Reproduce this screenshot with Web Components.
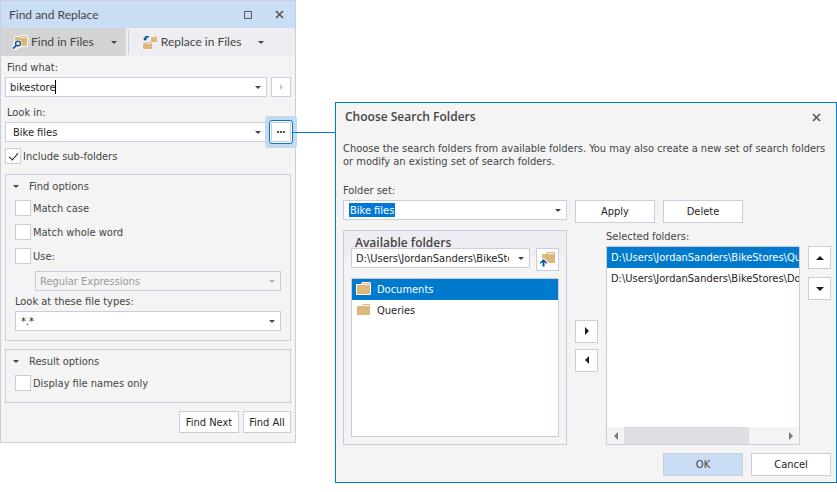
<!DOCTYPE html>
<html lang="en">
<head>
<meta charset="utf-8">
<title>Find and Replace</title>
<style>
  html { background: #fff; }
  body {
    margin: 0;
    font: 11px/13px "DejaVu Sans Condensed", "DejaVu Sans", sans-serif;
    color: #444;
    --line: #ccccdf;
    --panel: #f4f4f4;
    --head: #eeeef2;
    --accent: #007acc;
    --soft: #c9def5;
    --title-font: Lato, "Open Sans", sans-serif;
    --heading-font: "Open Sans", "Noto Sans", sans-serif;
  }
</style>
</head>
<body>
<search-workspace></search-workspace>

<script>
const define = (name, html, setup) => {
  const template = document.createElement('template');
  template.innerHTML = '<style>*{box-sizing:border-box}</style>' + html;
  customElements.define(name, class extends HTMLElement {
    connectedCallback() {
      if (this.shadowRoot) return;
      const root = this.attachShadow({ mode: 'open' });
      root.append(template.content.cloneNode(true));
      if (setup) setup(this, root);
    }
  });
};

const ICONS = {
  down: ['8 4', '<path d="M0 0h8L4 4z"/>'],
  up: ['8 4', '<path d="M0 4h8L4 0z"/>'],
  right: ['4 8', '<path d="M0 0v8l4-4z"/>'],
  left: ['4 8', '<path d="M4 0v8L0 4z"/>'],
  small: ['6 3', '<path d="M0 0h6L3 3z"/>'],
  play: ['3 6', '<path d="M0 0v6l3-3z"/>'],
  dots: ['8 2', '<path d="M0 0h2v2H0zM3 0h2v2H3zM6 0h2v2H6z"/>'],
  close: ['9 9', '<path d="M1 1l7 7M8 1L1 8" fill="none" stroke="currentColor" stroke-width="1.6"/>'],
  max: ['8 8', '<path d="M.5.5h7v7h-7z" fill="none" stroke="currentColor"/>'],
  folder: ['15 13', '<path d="M0 2h5l1-2h8l1 1v11l-1 1H0z" fill="#fff"/><path d="M1 3h5l1-2h7v11H1z" fill="#dcb67a"/><path d="M7 2h6v1H6.500z" fill="#fff"/>'],
  search: ['16 15', '<path d="M2 1h5l1-1h8v12H9L4 15H0v-4l2-2z" fill="#f6f6f6"/><path d="M3 2h5l1-1h6v10H9.500V6.500L7 4.500 3 6z" fill="#dcb67a"/><path d="M9 2h5v1H8.500z" fill="#fff"/><circle cx="6" cy="8.500" r="2.400" fill="#f0f0f0" stroke="#00539c" stroke-width="1.300"/><path d="M4.300 10.300L1 13.600" stroke="#00539c" stroke-width="1.700"/>'],
  replace: ['16 15', '<path d="M9 1h2l1-1h4v7H9zM0 8h1l1-2h6l1 1v8H0z" fill="#f6f6f6"/><path d="M9 2h3l1-1h2v6H9zM1 8h2l1-1h5v1h1v6H1z" fill="#dcb67a"/><path d="M13 2h1v1h-1zM5 8h3v1H5z" fill="#fff"/><path d="M7 1.700H4.500Q3 1.700 3 4" fill="none" stroke="#00539c" stroke-width="1.500"/><path d="M1 3.300h4.500L3 6z" fill="#00539c"/>'],
  parent: ['15 15', '<path d="M2 2h4l1-2h8v11H2z" fill="#dcb67a"/><path d="M8 1h6v1H7.500z" fill="#fff"/><path d="M3.500 5.500l5 5v2H6v2.500H1v-2.500h-1v-3z" fill="#fff"/><path d="M3.500 7l3.500 3.500v1.500L4.500 10v4.500h-2V10L0 12v-1.500z" fill="#00539c"/>']
};

define('ui-icon', `
  <style>:host{display:block;flex:none;line-height:0} svg{display:block;fill:currentColor}</style>
  <svg aria-hidden="true"></svg>`, (host, root) => {
  const [size, body] = ICONS[host.getAttribute('name')];
  const [w, h] = size.split(' ');
  const svg = root.querySelector('svg');
  svg.setAttribute('viewBox', '0 0 ' + size);
  svg.setAttribute('width', w);
  svg.setAttribute('height', h);
  svg.innerHTML = body;
});

define('push-button', `
  <style>
    :host{display:block}
    button{display:flex;align-items:center;justify-content:center;width:100%;height:100%;
      padding:4px 5px;font:inherit;color:#1e1e1e;background:#fff;border:1px solid var(--line);border-radius:0;white-space:nowrap}
    :host([primary]) button{background:var(--soft);color:#444}
    :host([bare]) button{background:none;border:0;padding:0;color:#555}
    :host([disabled]) button{color:#c4c4cc}
    :host([focused]) button{outline:1px solid var(--accent);outline-offset:1px;color:#555;
      box-shadow:0 0 0 1px #fff,0 0 0 6px #c3daee;border-radius:1px}
    :host([focused]){position:relative}
  </style>
  <button type="button"><slot></slot></button>`, (host, root) => {
  const b = root.querySelector('button');
  b.disabled = host.hasAttribute('disabled');
  if (host.hasAttribute('label')) b.setAttribute('aria-label', host.getAttribute('label'));
});

define('select-box', `
  <style>
    :host{display:block;min-width:0}
    label{display:block;padding-left:var(--label-inset,0)}
    .box{display:grid;grid-template-columns:minmax(0,1fr) 17px;align-items:center;height:20px;
      border:1px solid var(--line);background:#fff;color:#444}
    label + .box{margin-top:3px}
    select{grid-area:1/1/2/3;appearance:none;width:100%;height:18px;margin:0;border:0;border-radius:0;outline:0;
      padding:0 20px 0 var(--inset,4px);font:inherit;color:#1e1e1e;background:none}
    ui-icon{grid-area:1/2;justify-self:center;pointer-events:none}
    :host([disabled]) .box{background:var(--panel);color:#b4b4b8}
    :host([disabled]) select{color:#999;opacity:1}
  </style>
  <label for="s"></label><div class="box"><select id="s"></select><ui-icon name="small"></ui-icon></div>`, (host, root) => {
  const label = root.querySelector('label'), select = root.querySelector('select');
  select.add(new Option(host.getAttribute('value')));
  select.disabled = host.hasAttribute('disabled');
  if (host.hasAttribute('label')) label.textContent = host.getAttribute('label');
  else { label.remove(); select.setAttribute('aria-label', host.getAttribute('name')); }
});

define('combo-input', `
  <style>
    :host{display:block;min-width:0}
    label{display:block;padding-left:var(--label-inset,0)}
    .box{display:flex;align-items:center;height:20px;margin-top:3px;border:1px solid var(--line);background:#fff;
      padding-left:var(--inset,4px)}
    input{field-sizing:content;min-width:0;height:14px;margin:0;padding:0;border:0;outline:0;border-radius:0;
      font:inherit;color:#1e1e1e;background:none}
    :host([caret]) input{border-right:1px solid #000}
    :host([selected]) input{background:#0078d7;color:#fff;padding:0 1px}
    button{width:17px;height:18px;margin-left:auto;padding:0;border:0;background:none;color:#444;display:grid;place-items:center}
  </style>
  <label for="i"></label>
  <div class="box"><input id="i" type="text"><button type="button" aria-label="Show list"><ui-icon name="small"></ui-icon></button></div>`, (host, root) => {
  root.querySelector('label').textContent = host.getAttribute('label');
  root.querySelector('input').value = host.getAttribute('value');
});

define('check-box', `
  <style>
    :host{display:block}
    label{display:flex;align-items:center;gap:2px;height:16px}
    input{appearance:none;flex:none;width:16px;height:16px;margin:0;border:1px solid var(--line);background:#fff;display:grid;place-items:center}
    input:checked::before{content:"";width:4px;height:8px;margin-top:-2px;border:solid #1e1e1e;border-width:0 1px 1px 0;
      transform:rotate(40deg)}
  </style>
  <label><input type="checkbox"><span><slot></slot></span></label>`, (host, root) => {
  root.querySelector('input').checked = host.hasAttribute('checked');
});

define('option-group', `
  <style>
    :host{display:block;border:1px solid var(--line);padding:5px 9px 9px}
    button{display:flex;align-items:center;gap:10px;margin:0 0 7px -2px;padding:0;border:0;background:none;font:inherit;color:inherit}
    .body{display:flex;flex-direction:column;gap:8px}
  </style>
  <button type="button" aria-expanded="true"><ui-icon name="small"></ui-icon><span></span></button>
  <div class="body"><slot></slot></div>`, (host, root) => {
  root.querySelector('span').textContent = host.getAttribute('heading');
});

define('tool-tab', `
  <style>
    :host{display:flex;height:28px}
    :host([active]){background:#d4d4d6}
    button{display:flex;align-items:center;border:0;margin:0;padding:0;background:none;font:12px/16px var(--title-font);color:inherit;white-space:nowrap}
    .main{padding-left:11px;gap:3px}
    .more{width:32px;justify-content:center;padding-left:8px}
  </style>
  <button type="button" class="main"><slot></slot></button>
  <button type="button" class="more" aria-label="More"><ui-icon name="small"></ui-icon></button>`, (host, root) => {
  const icon = document.createElement('ui-icon');
  icon.setAttribute('name', host.getAttribute('icon'));
  root.querySelector('.main').prepend(icon);
});

define('folder-list', `
  <style>
    :host{display:flex;flex-direction:column;min-width:0;border:1px solid var(--line);background:#fff;overflow:hidden}
    ul{list-style:none;margin:0;padding:0;flex:1;overflow:hidden}
  </style>
  <ul role="listbox"><slot></slot></ul><slot name="bar"></slot>`, (host, root) => {
  root.querySelector('ul').setAttribute('aria-label', host.getAttribute('label'));
});

define('folder-item', `
  <style>
    :host{display:flex;align-items:center;gap:6px;height:21px;padding-left:4px;color:#1e1e1e;white-space:nowrap}
    :host([selected]){background:var(--accent);color:#fff}
    ui-icon{margin-top:-3px}
  </style>
  <ui-icon name="folder"></ui-icon><span><slot></slot></span>`, (host, root) => {
  host.setAttribute('role', 'option');
  if (host.hasAttribute('plain')) root.querySelector('ui-icon').remove();
});

define('scroll-strip', `
  <style>
    :host{display:grid;grid-template-columns:17px minmax(0,1fr) 17px;height:17px;background:var(--panel);color:#777}
    button{display:grid;place-items:center;padding:0;border:0;background:none;color:inherit}
    .thumb{width:79%;height:17px;background:#dedee3}
  </style>
  <button type="button" aria-label="Scroll left"><ui-icon name="left"></ui-icon></button>
  <div><div class="thumb"></div></div>
  <button type="button" aria-label="Scroll right"><ui-icon name="right"></ui-icon></button>`);

define('find-window', `
  <style>
    :host{display:block;border:1px solid var(--line);background:var(--panel)}
    header{display:flex;align-items:center;gap:23px;height:27px;padding:0 11px 0 8px;background:var(--soft)}
    h1{margin:0 auto 0 0;font:12px/16px var(--title-font)}
    nav{display:flex;background:var(--head);height:28px}
    nav i{width:1px;margin:2px 2px;background:var(--line)}
    .form{padding:5px 4px 9px;display:flex;flex-direction:column}
    .row{display:grid;grid-template-columns:minmax(0,1fr) 20px;gap:4px;align-items:end;--label-inset:2px}
    .row + .row{margin-top:9px}
    .row push-button{height:20px}
    .row select-box{--inset:7px}
    check-box.sub{margin:6px 0 10px}
    .indent{margin:-1px 0 -4px 20px}
    .types{--inset:5px}
    option-group + option-group{margin-top:8px;padding-bottom:11px}
    footer{display:flex;justify-content:flex-end;gap:4px;margin-top:8px}
    footer push-button{height:22px}
    footer push-button:first-child{width:60px}
    footer push-button:last-child{width:48px}
  </style>
  <header><h1>Find and Replace</h1>
    <push-button bare label="Maximize"><ui-icon name="max"></ui-icon></push-button>
    <push-button bare label="Close"><ui-icon name="close"></ui-icon></push-button></header>
  <nav><tool-tab active icon="search">Find in Files</tool-tab><i></i><tool-tab icon="replace">Replace in Files</tool-tab></nav>
  <div class="form">
    <div class="row"><combo-input caret label="Find what:" value="bikestore"></combo-input>
      <push-button disabled label="Expression builder"><ui-icon name="play"></ui-icon></push-button></div>
    <div class="row"><select-box label="Look in:" value="Bike files"></select-box>
      <push-button focused label="Choose search folders"><ui-icon name="dots"></ui-icon></push-button></div>
    <check-box class="sub" checked>Include sub-folders</check-box>
    <option-group heading="Find options">
      <check-box>Match case</check-box>
      <check-box>Match whole word</check-box>
      <check-box>Use:</check-box>
      <select-box class="indent" disabled name="Expression type" value="Regular Expressions"></select-box>
      <select-box class="types" label="Look at these file types:" value="*.*"></select-box>
    </option-group>
    <option-group heading="Result options">
      <check-box>Display file names only</check-box>
    </option-group>
    <footer><push-button>Find Next</push-button><push-button>Find All</push-button></footer>
  </div>`);

define('folders-dialog', `
  <style>
    :host{display:block;border:1px solid var(--accent);background:var(--panel);padding:6px 5px 6px 7px}
    header{display:flex;align-items:center;justify-content:space-between;padding:0 10px 0 2px}
    h2,h3{margin:0;font:600 12px/16px var(--heading-font)}
    p{margin:17px 0 16px}
    .grid{display:grid;grid-template-columns:minmax(0,224fr) 23px minmax(0,194fr) 23px;column-gap:8px;row-gap:7px}
    .set{--inset:5px}
    .actions{grid-column:2/-1;display:flex;gap:8px;padding-top:16px}
    push-button{height:23px}
    header push-button{height:16px}
    .wide{width:80px}
    .available{border:1px solid var(--line);padding:4px 7px 7px;display:flex;flex-direction:column;
      background:linear-gradient(var(--head) 25px,transparent 25px)}
    h3{margin-bottom:-3px;padding-left:4px}
    .path{display:flex;gap:6px}
    .path select-box{flex:1}
    .path push-button{width:23px}
    .available folder-list{margin-top:7px;flex:1}
    .move{display:flex;flex-direction:column;justify-content:center;gap:6px;padding-top:16px}
    .selected{display:flex;flex-direction:column;min-width:0}
    .selected folder-list{height:199px;margin-top:3px}
    .order{display:flex;flex-direction:column;gap:8px;padding-top:16px}
    footer{display:flex;justify-content:flex-end;gap:8px;margin-top:8px}
  </style>
  <header><h2>Choose Search Folders</h2><push-button bare label="Close"><ui-icon name="close"></ui-icon></push-button></header>
  <p>Choose the search folders from available folders. You may also create a new set of search folders or modify an existing set of search folders.</p>
  <div class="grid">
    <combo-input class="set" selected label="Folder set:" value="Bike files"></combo-input>
    <div class="actions"><push-button class="wide">Apply</push-button><push-button class="wide">Delete</push-button></div>
    <section class="available">
      <h3>Available folders</h3>
      <div class="path"><select-box name="Available folders" value="D:\\Users\\JordanSanders\\BikeStores"></select-box>
        <push-button label="Parent folder"><ui-icon name="parent"></ui-icon></push-button></div>
      <folder-list label="Available folders"><folder-item selected>Documents</folder-item><folder-item>Queries</folder-item></folder-list>
    </section>
    <div class="move"><push-button label="Add"><ui-icon name="right"></ui-icon></push-button>
      <push-button label="Remove"><ui-icon name="left"></ui-icon></push-button></div>
    <section class="selected"><span>Selected folders:</span>
      <folder-list label="Selected folders">
        <folder-item plain selected>D:\\Users\\JordanSanders\\BikeStores\\Queries</folder-item>
        <folder-item plain>D:\\Users\\JordanSanders\\BikeStores\\Documents</folder-item>
        <scroll-strip slot="bar"></scroll-strip>
      </folder-list></section>
    <div class="order"><push-button label="Move up"><ui-icon name="up"></ui-icon></push-button>
      <push-button label="Move down"><ui-icon name="down"></ui-icon></push-button></div>
  </div>
  <footer><push-button class="wide" primary>OK</push-button><push-button class="wide">Cancel</push-button></footer>`);

define('search-workspace', `
  <style>
    :host{display:grid;grid-template-columns:minmax(0,296fr) minmax(0,39fr) minmax(0,502fr);align-items:start}
    folders-dialog{margin-top:102px}
    .link{height:1px;margin:132px 0 0 -3px;background:var(--accent);position:relative}
  </style>
  <find-window></find-window><div class="link"></div><folders-dialog></folders-dialog>`);
</script>
</body>
</html>
